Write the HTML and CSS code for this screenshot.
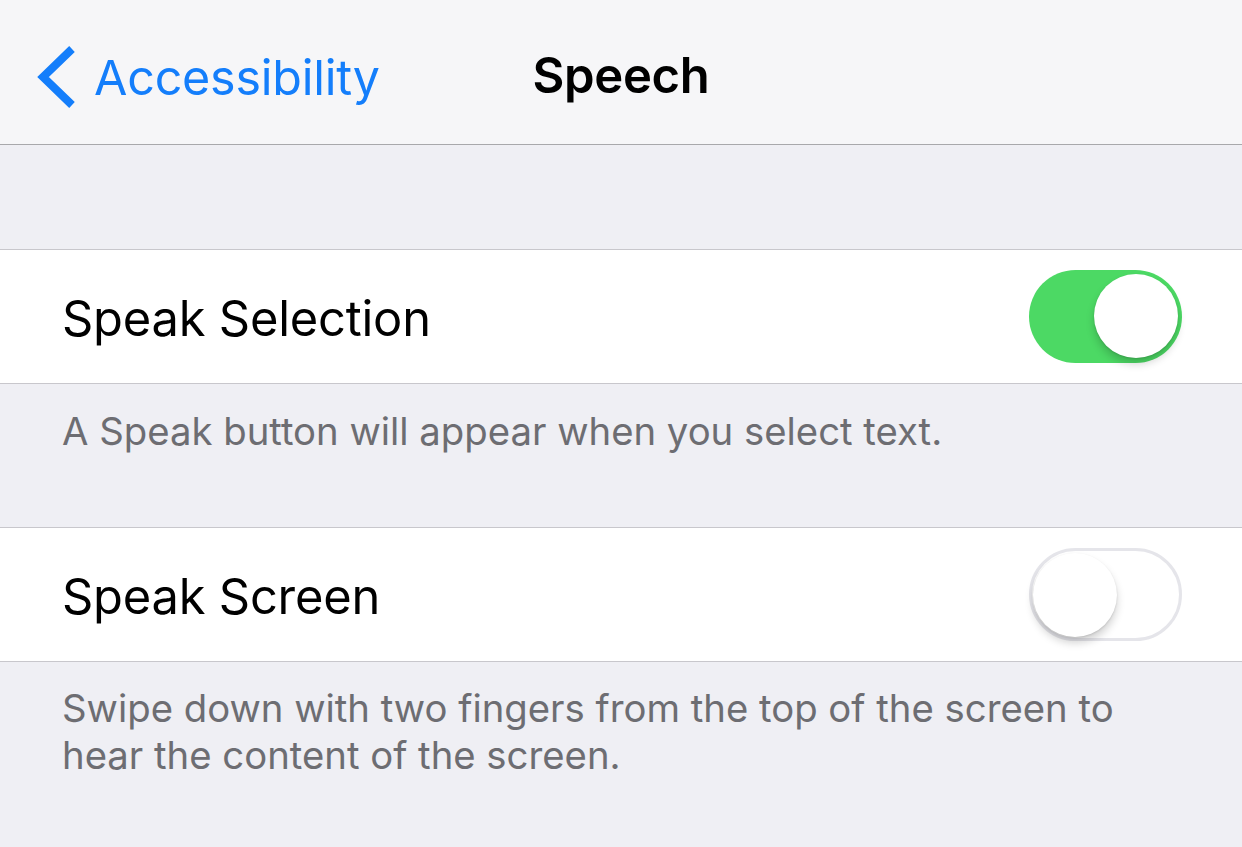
FILE: index.html
```html
<!DOCTYPE html>
<html>
<head>
<meta charset="utf-8">
<link rel="stylesheet" href="styles.css">
</head>
<body>
<div class="screen">
  <header class="navbar">
    <div class="back">
      <svg class="chevron" width="40" height="62" viewBox="0 0 40 62">
        <path d="M36 3 L7 31 L36 59" fill="none" stroke="#147efb" stroke-width="8"/>
      </svg>
      <span class="back-label">Accessibility</span>
    </div>
    <h1 class="title">Speech</h1>
  </header>
  <div class="spacer-top"></div>
  <div class="cell">
    <span class="cell-label">Speak Selection</span>
    <div class="switch on"><div class="knob"></div></div>
  </div>
  <div class="footer first">A Speak button will appear when you select text.</div>
  <div class="cell">
    <span class="cell-label">Speak Screen</span>
    <div class="switch off"><div class="knob"></div></div>
  </div>
  <div class="footer second">Swipe down with two fingers from the top of the screen to hear the content of the screen.</div>
</div>
</body>
</html>
```
FILE: styles.css
```css
html, body {
  margin: 0;
  padding: 0;
}
body {
  background: #efeff4;
  font-family: Inter, "Noto Sans", "Liberation Sans", sans-serif;
  width: 1242px;
  height: 847px;
  overflow: hidden;
}
.screen {
  display: flex;
  flex-direction: column;
  width: 1242px;
  height: 847px;
}
.navbar {
  position: relative;
  height: 144px;
  background: #f6f6f8;
  border-bottom: 1px solid #a8a8ab;
  display: flex;
  align-items: center;
  flex-shrink: 0;
}
.back {
  display: flex;
  align-items: center;
  margin-left: 36px;
  margin-top: 13px;
}
.chevron {
  display: block;
  margin-top: -4px;
}
.back-label {
  color: #147efb;
  font-size: 48.4px;
  margin-left: 18px;
  letter-spacing: -0.2px;
  margin-top: -2px;
}
.title {
  position: absolute;
  left: 0;
  right: 0;
  top: 46px;
  margin: 0;
  text-align: center;
  font-size: 49px;
  font-weight: 600;
  color: #000;
  letter-spacing: -0.3px;
}
.spacer-top {
  height: 104px;
  flex-shrink: 0;
}
.cell {
  height: 133px;
  flex-shrink: 0;
  background: #fff;
  border-top: 1px solid #c8c7cc;
  border-bottom: 1px solid #c8c7cc;
  display: flex;
  align-items: center;
  justify-content: space-between;
  padding: 0 60px 0 62px;
}
.cell-label {
  font-size: 48.8px;
  color: #000;
  letter-spacing: -0.2px;
  margin-top: 3px;
}
.switch {
  position: relative;
  width: 153px;
  height: 93px;
  border-radius: 47px;
  box-sizing: border-box;
}
.switch.on {
  background: #4cd964;
}
.switch.off {
  background: #fff;
  border: 3px solid #e5e5ea;
}
.knob {
  position: absolute;
  width: 84px;
  height: 84px;
  border-radius: 50%;
  background: #fff;
  box-shadow: 0 6px 8px rgba(0,0,0,0.18), 0 1px 2px rgba(0,0,0,0.12);
}
.switch.on .knob {
  top: 4px;
  right: 4px;
}
.switch.off .knob {
  top: 2px;
  left: 1px;
}
.footer {
  color: #6d6d72;
  font-size: 38.3px;
  letter-spacing: 0px;
  padding: 0 60px 0 62px;
  flex-shrink: 0;
  line-height: 47px;
}
.footer.first {
  height: 143px;
  padding-top: 24px;
  box-sizing: border-box;
}
.footer.second {
  padding-top: 23px;
}
```
